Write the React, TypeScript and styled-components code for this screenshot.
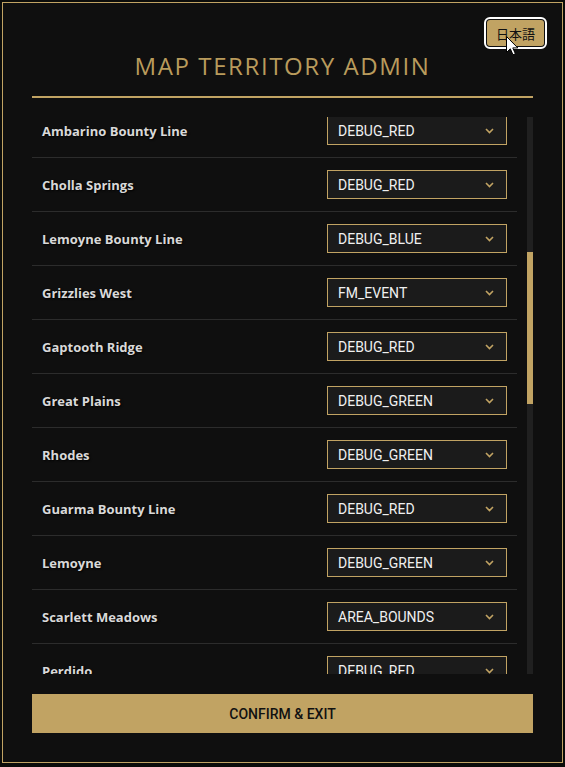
import React, { useLayoutEffect, useRef, useState } from 'react';
import styled, { createGlobalStyle } from 'styled-components';

const gold = '#c1a363';

interface Territory {
  name: string;
  type: string;
}

const territories: Territory[] = [
  { name: 'Annesburg', type: 'DEBUG_RED' },
  { name: 'Armadillo', type: 'DEBUG_BLUE' },
  { name: 'Bayou Nwa', type: 'DEBUG_GREEN' },
  { name: 'Big Valley', type: 'DEBUG_RED' },
  { name: 'Blackwater', type: 'AREA_BOUNDS' },
  { name: 'Bluewater Marsh', type: 'DEBUG_GREEN' },
  { name: 'Cumberland Forest', type: 'DEBUG_RED' },
  { name: 'Grizzlies East', type: 'DEBUG_BLUE' },
  { name: 'Heartlands', type: 'DEBUG_GREEN' },
  { name: 'Ambarino Bounty Line', type: 'DEBUG_RED' },
  { name: 'Cholla Springs', type: 'DEBUG_RED' },
  { name: 'Lemoyne Bounty Line', type: 'DEBUG_BLUE' },
  { name: 'Grizzlies West', type: 'FM_EVENT' },
  { name: 'Gaptooth Ridge', type: 'DEBUG_RED' },
  { name: 'Great Plains', type: 'DEBUG_GREEN' },
  { name: 'Rhodes', type: 'DEBUG_GREEN' },
  { name: 'Guarma Bounty Line', type: 'DEBUG_RED' },
  { name: 'Lemoyne', type: 'DEBUG_GREEN' },
  { name: 'Scarlett Meadows', type: 'AREA_BOUNDS' },
  { name: 'Perdido', type: 'DEBUG_RED' },
  { name: 'Rio Bravo', type: 'DEBUG_BLUE' },
  { name: 'Roanoke Ridge', type: 'DEBUG_GREEN' },
  { name: 'Saint Denis', type: 'FM_EVENT' },
  { name: 'Strawberry', type: 'DEBUG_RED' },
  { name: 'Tall Trees', type: 'DEBUG_GREEN' },
  { name: 'Tumbleweed', type: 'DEBUG_RED' },
  { name: 'Valentine', type: 'DEBUG_BLUE' },
  { name: 'Van Horn', type: 'DEBUG_RED' },
  { name: 'West Elizabeth', type: 'DEBUG_GREEN' },
  { name: 'New Austin Bounty Line', type: 'DEBUG_RED' },
  { name: 'New Hanover', type: 'AREA_BOUNDS' },
  { name: "Hennigan's Stead", type: 'DEBUG_GREEN' },
  { name: 'Guarma', type: 'DEBUG_RED' },
  { name: 'Emerald Ranch', type: 'DEBUG_BLUE' },
  { name: 'Flatneck Station', type: 'DEBUG_RED' },
  { name: 'Lagras', type: 'DEBUG_GREEN' },
  { name: 'Thieves Landing', type: 'DEBUG_RED' },
  { name: 'Wapiti', type: 'DEBUG_GREEN' },
];

const Chevron = () => (
  <svg width="9" height="6" viewBox="0 0 9 6">
    <polyline points="1,1 4.5,4.5 8,1" fill="none" stroke={gold} strokeWidth="1.6" />
  </svg>
);

const Cursor = () => (
  <svg width="13" height="20" viewBox="0 0 13 20">
    <path
      d="M0.5 0.5 L0.5 16.5 L4.3 12.8 L7 18.8 L9.4 17.8 L6.8 11.9 L11.8 11.9 Z"
      fill="#fff"
      stroke="#000"
      strokeWidth="1"
    />
  </svg>
);

export default function App() {
  const listRef = useRef<HTMLDivElement>(null);
  const [thumb, setThumb] = useState({ top: 0, height: 0 });

  const updateThumb = () => {
    const el = listRef.current;
    if (!el) return;
    const ratio = el.clientHeight / el.scrollHeight;
    setThumb({ top: el.scrollTop * ratio, height: el.clientHeight * ratio });
  };

  useLayoutEffect(() => {
    if (listRef.current) listRef.current.scrollTop = 499;
    updateThumb();
  }, []);

  return (
    <>
      <GlobalStyle />
      <Panel>
        <LangButton>日本語</LangButton>
        <CursorMark>
          <Cursor />
        </CursorMark>
        <Header>
          <Title>MAP TERRITORY ADMIN</Title>
        </Header>
        <ListArea>
          <List ref={listRef} onScroll={updateThumb}>
            {territories.map((t) => (
              <Row key={t.name}>
                <Label>{t.name}</Label>
                <Dropdown role="combobox">
                  <span>{t.type}</span>
                  <Chevron />
                </Dropdown>
              </Row>
            ))}
          </List>
          <Track>
            <Thumb style={{ top: thumb.top, height: thumb.height }} />
          </Track>
        </ListArea>
        <ConfirmButton>CONFIRM &amp; EXIT</ConfirmButton>
      </Panel>
    </>
  );
}

const GlobalStyle = createGlobalStyle`
  html, body {
    margin: 0;
    background: #0b0c0a;
  }
  body {
    padding: 2px;
    font-family: 'Open Sans', sans-serif;
  }
`;

const Panel = styled.div`
  position: relative;
  box-sizing: border-box;
  width: 561px;
  display: flex;
  flex-direction: column;
  background: #0f0f0f;
  border: 1px solid ${gold};
  padding: 0 29px 29px;
`;

const LangButton = styled.button`
  position: absolute;
  top: 17px;
  right: 18px;
  width: 57px;
  height: 26px;
  padding: 0;
  border: none;
  border-radius: 3px;
  background: ${gold};
  color: #111;
  font-family: 'Noto Sans CJK JP', sans-serif;
  font-size: 13px;
  outline: 2px solid #fff;
  outline-offset: 1px;
  cursor: pointer;
`;

const CursorMark = styled.div`
  position: absolute;
  left: 503px;
  top: 33px;
  width: 13px;
  height: 20px;
  pointer-events: none;
`;

const Header = styled.div`
  padding-top: 47px;
  padding-bottom: 14px;
  border-bottom: 2px solid ${gold};
  margin-bottom: 19px;
`;

const Title = styled.h1`
  margin: 0;
  text-align: center;
  font-family: 'Open Sans', sans-serif;
  font-weight: 400;
  font-size: 24px;
  line-height: 32px;
  letter-spacing: 1.6px;
  color: #b99b5c;
`;

const ListArea = styled.div`
  display: flex;
  gap: 10px;
  height: 557px;
`;

const List = styled.div`
  flex: 1;
  overflow-y: scroll;
  scrollbar-width: none;

  &::-webkit-scrollbar {
    display: none;
  }
`;

const Track = styled.div`
  position: relative;
  width: 6px;
  background: #202020;
`;

const Thumb = styled.div`
  position: absolute;
  left: 0;
  width: 6px;
  background: ${gold};
`;

const Row = styled.div`
  box-sizing: border-box;
  height: 54px;
  display: flex;
  align-items: center;
  justify-content: space-between;
  padding: 0 10px;
  border-bottom: 1px solid #2c2c2c;
`;

const Label = styled.span`
  font-family: 'Open Sans', sans-serif;
  font-weight: 700;
  font-size: 13px;
  color: #d9d9d9;
  text-shadow: 1px 1px 2px rgba(0, 0, 0, 0.9);
`;

const Dropdown = styled.div`
  box-sizing: border-box;
  width: 180px;
  height: 29px;
  display: flex;
  align-items: center;
  justify-content: space-between;
  padding: 0 12px 0 10px;
  background: #1b1b1b;
  border: 1px solid ${gold};
  font-family: Roboto, sans-serif;
  font-size: 14px;
  color: #f0f0f0;
`;

const ConfirmButton = styled.button`
  margin-top: 20px;
  height: 39px;
  border: none;
  background: ${gold};
  color: #111;
  font-family: Roboto, sans-serif;
  font-weight: 500;
  font-size: 14px;
  cursor: pointer;
`;
